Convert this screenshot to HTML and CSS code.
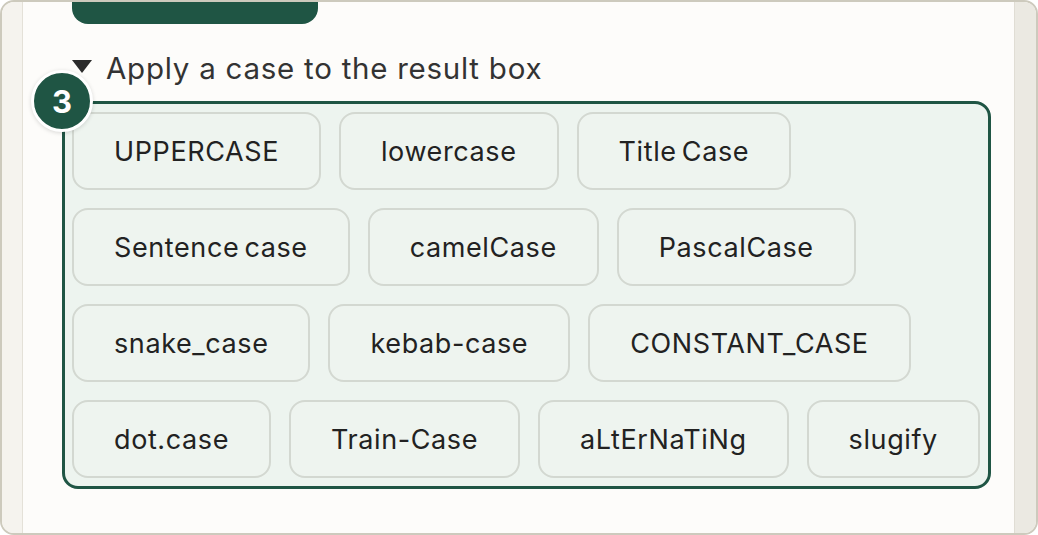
FILE: index.html
```html
<!DOCTYPE html>
<html lang="en">
<head>
  <meta charset="UTF-8">
  <meta name="viewport" content="width=device-width, initial-scale=1.0">
  <title>Case Converter</title>
  <link rel="stylesheet" href="styles.css">
</head>
<body>
  <div class="frame">
    <div class="gutter-left"></div>
    <main class="panel">
      <div class="tab"></div>
      <details class="cases" open>
        <summary><span class="arrow"></span>Apply a case to the result box</summary>
        <div class="case-box">
          <span class="step">3</span>
          <button class="case-btn">UPPERCASE</button>
          <button class="case-btn">lowercase</button>
          <button class="case-btn">Title Case</button>
          <button class="case-btn">Sentence case</button>
          <button class="case-btn">camelCase</button>
          <button class="case-btn">PascalCase</button>
          <button class="case-btn">snake_case</button>
          <button class="case-btn">kebab-case</button>
          <button class="case-btn">CONSTANT_CASE</button>
          <button class="case-btn">dot.case</button>
          <button class="case-btn">Train-Case</button>
          <button class="case-btn">aLtErNaTiNg</button>
          <button class="case-btn">slugify</button>
        </div>
      </details>
    </main>
    <div class="gutter-right"></div>
  </div>
</body>
</html>
```

FILE: styles.css
```css
* {
    box-sizing: border-box;
}
html, body {
    margin: 0;
    height: 100%;
}
body {
    font-family: Inter, "Noto Sans", sans-serif;
    background: #ffffff;
}
.frame {
    display: flex;
    height: 535px;
    width: 1038px;
    border: 2px solid #cdcabd;
    border-radius: 14px;
    overflow: hidden;
    background: #fdfcfa;
}
.gutter-left {
    width: 21px;
    background: #f5f3ee;
    border-right: 1px solid #e4e1d8;
}
.gutter-right {
    width: 22px;
    background: #ebe9e2;
    border-left: 1px solid #e0ddd4;
}
.panel {
    flex: 1;
    background: #fdfcfa;
}
.tab {
    width: 246px;
    height: 22px;
    margin-left: 49px;
    background: #1f5544;
    border-radius: 0 0 16px 16px;
}
.cases summary {
    list-style: none;
    display: flex;
    align-items: center;
    margin: 27px 0 0 49px;
    font-size: 29.5px;
    line-height: 35px;
    letter-spacing: 0.75px;
    color: #333333;
    cursor: pointer;
}
.cases summary::-webkit-details-marker {
    display: none;
}
.arrow {
    width: 0;
    height: 0;
    border-left: 10px solid transparent;
    border-right: 10px solid transparent;
    border-top: 13px solid #2b2b2b;
    margin-right: 14px;
    margin-top: -4px;
}
.case-box {
    position: relative;
    display: flex;
    flex-wrap: wrap;
    gap: 18px;
    width: 929px;
    margin: 15px 0 0 39px;
    padding: 8px 7px;
    background: #edf4ef;
    border: 3px solid #1f5544;
    border-radius: 16px;
}
.step {
    position: absolute;
    left: -34px;
    top: -34px;
    width: 62px;
    height: 62px;
    display: flex;
    align-items: center;
    justify-content: center;
    border-radius: 50%;
    background: #1f5544;
    border: 3px solid #ffffff;
    box-shadow: 0 1px 4px rgba(0, 0, 0, 0.15);
    color: #ffffff;
    font-size: 31px;
    font-weight: 700;
}
.case-btn {
    height: 78px;
    padding: 0 40px;
    font-family: Inter, "Noto Sans", sans-serif;
    font-size: 27px;
    letter-spacing: 0.6px;
    word-spacing: -3px;
    color: #222222;
    background: #eef4ef;
    border: 2px solid #d3d8d1;
    border-radius: 16px;
    cursor: pointer;
}
```
